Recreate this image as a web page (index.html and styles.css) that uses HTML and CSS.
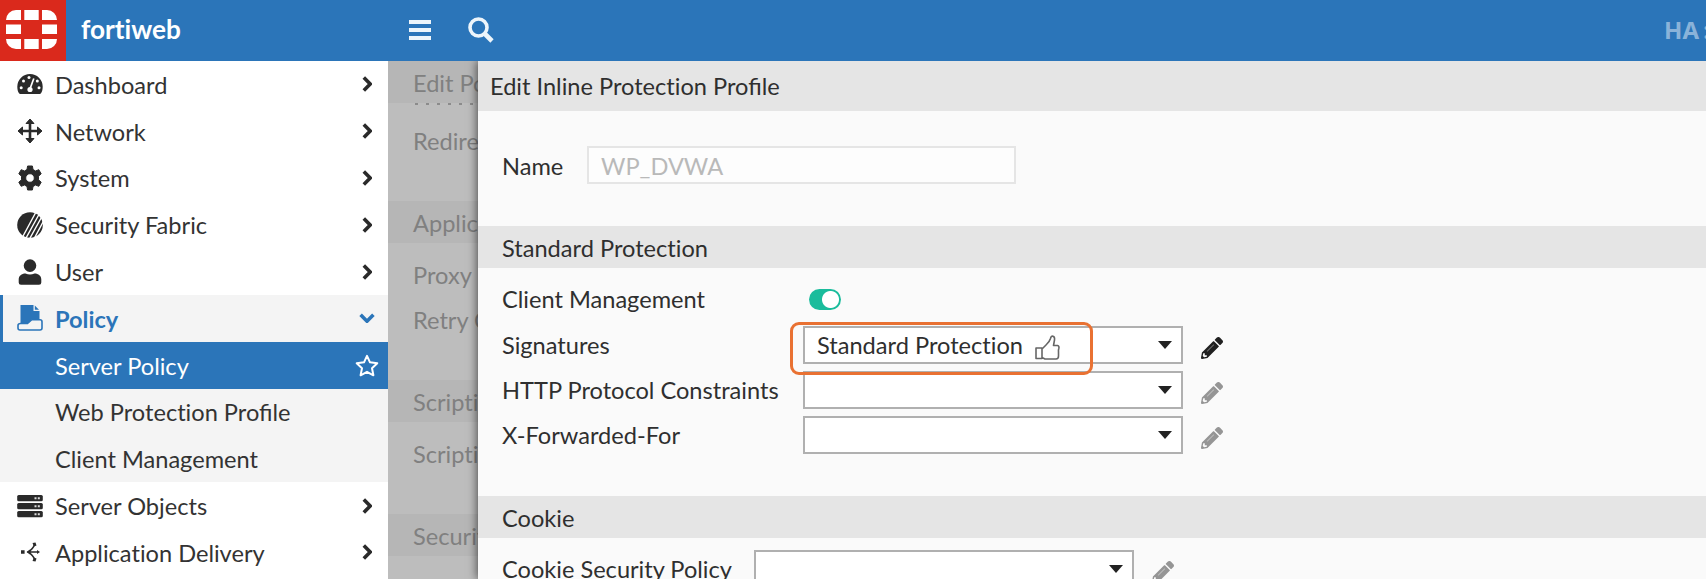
FILE: index.html
```html
<!DOCTYPE html>
<html lang="en">
<head>
<meta charset="utf-8">
<title>fortiweb</title>
<link rel="stylesheet" href="styles.css">
</head>
<body>
<svg class="defs" width="0" height="0">
  <symbol id="right" viewBox="0 0 10 16"><path d="M1.8 1.6 L8.2 8 L1.8 14.4" fill="none" stroke="currentColor" stroke-width="3.6"/></symbol>
  <symbol id="pencil" viewBox="0 0 512 512"><path fill="currentColor" d="M498 142l-46 46c-5 5-13 5-17 0L324 77c-5-5-5-12 0-17l46-46c19-19 49-19 68 0l60 60c19 19 19 49 0 68zm-214-42L22 362 0 484c-3 16 12 30 28 28l122-22 262-262c5-5 5-13 0-17L301 100c-4-5-12-5-17 0zM88 424h48v36l-64 12-32-32 12-64h36v48z"/><path d="M140 335L300 175" stroke="#fff" stroke-opacity=".35" stroke-width="24"/></symbol>
</svg>
<header class="topbar">
  <div class="logo">
    <svg width="51" height="39" viewBox="0 0 51 39" fill="#fff"><path d="M0 10A10 10 0 0 1 10 0H15V10ZM18.300 0H32.700V10H18.300ZM36 0H41A10 10 0 0 1 51 10H36ZM0 14.500H15V24H0ZM36 14.500H51V24H36ZM0 29H15V39H10A10 10 0 0 1 0 29ZM18.300 29H32.700V39H18.300ZM36 29H51A10 10 0 0 1 41 39H36Z"/></svg>
  </div>
  <div class="brand">fortiweb</div>
  <svg class="burger" width="22" height="20" viewBox="0 0 22 20" fill="#edf5fb"><path d="M0 0H22V4H0ZM0 8H22V12H0ZM0 16H22V20H0Z"/></svg>
  <svg class="search" width="26" height="26" viewBox="0 0 26 26" fill="none" stroke="#edf5fb"><circle cx="10.500" cy="10.500" r="8.500" stroke-width="3.600"/><path d="M17 17L24 24" stroke-width="4.600"/></svg>
  <div class="ha">HA :</div>
</header>
<div class="body">
  <nav class="sidebar">
    <a class="item"><svg class="ico" viewBox="0 0 26 26"><path fill="currentColor" d="M13 3A12.700 12.700 0 0 0 .3 15.700C.3 18.500 1 21 2.200 22.600Q2.600 23 3.200 23H22.800Q23.400 23 23.800 22.600C25 21 25.700 18.500 25.700 15.700A12.700 12.700 0 0 0 13 3Z"/><g fill="#fff"><circle cx="4.200" cy="16.800" r="1.500"/><circle cx="6.500" cy="10" r="1.500"/><circle cx="12" cy="6.500" r="1.500"/><circle cx="20.300" cy="10" r="1.500"/><circle cx="22" cy="16.800" r="1.500"/></g><path d="M16.800 7.500L13.300 17" stroke="#fff" stroke-width="1.700"/><circle cx="13" cy="18.500" r="2.600" fill="#fff"/></svg><span>Dashboard</span><svg class="chev"><use href="#right"/></svg></a>
    <a class="item"><svg class="ico" viewBox="0 0 26 26"><path d="M13 4V22M4 13H22" stroke="currentColor" stroke-width="2.600"/><path fill="currentColor" stroke="currentColor" stroke-linejoin="round" d="M13 1L17 5.500H9ZM13 25L17 20.500H9ZM1 13L5.500 9V17ZM25 13L20.500 9V17Z"/></svg><span>Network</span><svg class="chev"><use href="#right"/></svg></a>
    <a class="item"><svg class="ico" viewBox="0 0 26 26"><path fill="currentColor" fill-rule="evenodd" stroke="currentColor" stroke-width="1" stroke-linejoin="round" d="M10.600 1H15.400L16 4.500L18.500 6L21.800 4.700L24.200 8.800L21.500 11.200V14.800L24.200 17.200L21.800 21.300L18.500 20L16 21.500L15.400 25H10.600L10 21.500L7.500 20L4.200 21.300L1.800 17.200L4.500 14.800V11.200L1.800 8.800L4.200 4.700L7.500 6L10 4.500ZM13 8.700A4.300 4.300 0 1 0 13 17.300A4.300 4.300 0 1 0 13 8.700Z"/></svg><span>System</span><svg class="chev"><use href="#right"/></svg></a>
    <a class="item"><svg class="ico" viewBox="0 0 26 26"><circle cx="13" cy="13" r="12.800" fill="currentColor"/><path d="M19 0L5 26M22.500 1.500L8.500 27M25.500 3.500L12.500 27M26.500 9L17 27" stroke="#fff" stroke-width="1.400"/></svg><span>Security Fabric</span><svg class="chev"><use href="#right"/></svg></a>
    <a class="item"><svg class="ico" viewBox="0 0 26 26"><path fill="currentColor" d="M13 .3A6.300 6.300 0 1 1 13 12.900A6.300 6.300 0 1 1 13 .3ZM8.500 14.500Q13 16.500 17.500 14.500C21.500 14.500 24.300 17 24.300 20.500V23.500Q24.300 25.700 22 25.700H4Q1.700 25.700 1.700 23.500V20.500C1.700 17 4.500 14.500 8.500 14.500Z"/></svg><span>User</span><svg class="chev"><use href="#right"/></svg></a>
    <a class="item open"><svg class="ico" viewBox="0 0 26 26"><path fill="currentColor" d="M3.500 0H16.500V6H22.500V14H15L11.500 18H3.500Z"/><path fill="currentColor" d="M17.800 .5L22 4.700H17.800Z"/><path fill="none" stroke="currentColor" stroke-width="1.600" stroke-linejoin="round" d="M3.500 18.500H10.500L14.500 14.800H23Q25 14.800 25 16.800V23Q25 25 23 25H3Q1 25 1 23V20.500Q1 18.500 3.500 18.500Z"/></svg><span>Policy</span><svg class="down" viewBox="0 0 16 10"><path d="M1.600 1.800L8 8.200L14.400 1.800" fill="none" stroke="currentColor" stroke-width="3.600"/></svg></a>
    <a class="sub active"><span>Server Policy</span><svg class="star" viewBox="0 0 24 23"><path fill="none" stroke="currentColor" stroke-width="2" stroke-linejoin="round" d="M12 1.800L15 8.300L22.300 9.200L17 14.200L18.400 21.300L12 17.800L5.600 21.300L7 14.200L1.700 9.200L9 8.300Z"/></svg></a>
    <a class="sub"><span>Web Protection <b class="lig">Profile</b></span></a>
    <a class="sub"><span>Client Management</span></a>
    <a class="item"><svg class="ico" viewBox="0 0 26 26"><g fill="currentColor"><rect x=".2" y="2" width="25.600" height="6.300" rx="1.500"/><rect x=".2" y="10" width="25.600" height="6.300" rx="1.500"/><rect x=".2" y="18" width="25.600" height="6.300" rx="1.500"/></g><path stroke="#ddd" stroke-width="2" stroke-dasharray="2 1.300" d="M17.500 5.200H23M17.500 13.200H23M17.500 21.200H23"/></svg><span>Server Objects</span><svg class="chev"><use href="#right"/></svg></a>
    <a class="item"><svg class="ico" viewBox="0 0 26 26"><path fill="none" stroke="currentColor" stroke-width="1.500" d="M17.500 5.500C16.500 9 13.500 11.500 11 13C13.500 14.500 16.500 17 17.500 20.500M10 13H21"/><path fill="currentColor" d="M4 11.200H7.600V14.800H4ZM15.500 4L18.500 3.500L19.500 6.500L17 7.500ZM15.500 22L18.500 22.500L19.500 19.500L17 18.500ZM20 11L23 13L20 15ZM10 13L13 10.500V15.500Z"/></svg><span>Application Delivery</span><svg class="chev"><use href="#right"/></svg></a>
  </nav>
  <main class="behind">
    <div class="band">Edit Policy</div>
    <div class="dots"></div>
    <div class="line redirect">Redirect</div>
    <div class="band">Application</div>
    <div class="line">Proxy</div>
    <div class="line retry">Retry On</div>
    <div class="band">Scripting</div>
    <div class="line single">Scripting</div>
    <div class="band">Security</div>
  </main>
  <section class="drawer">
    <h1 class="title">Edit Inline Protection <b class="lig">Profile</b></h1>
    <div class="name-row"><label>Name</label><div class="input">WP_DVWA</div></div>
    <h2 class="section">Standard Protection</h2>
    <div class="form">
      <div class="row toggle-row"><label>Client Management</label><div class="toggle"></div></div>
      <div class="row"><label>Signatures</label><div class="select"><span>Standard Protection</span><svg class="thumb" viewBox="0 0 25 25"><path fill="#fff" stroke="#666" stroke-width="1.600" stroke-linejoin="round" d="M1 13H7V23.500H1ZM7 14L11 10Q14.500 7 15.500 3.500Q16 .8 18 1.200Q20 1.800 19.500 5L18.500 10.500H22.500Q24.500 11 23.800 13.500Q23.300 15 23.500 17V21Q23.500 24 21 24H10L7 22.500Z"/></svg><i class="caret"></i><div class="highlight"></div></div><svg class="pencil dark"><use href="#pencil"/></svg></div>
      <div class="row"><label>HTTP Protocol Constraints</label><div class="select"><i class="caret"></i></div><svg class="pencil"><use href="#pencil"/></svg></div>
      <div class="row"><label>X-Forwarded-For</label><div class="select"><i class="caret"></i></div><svg class="pencil"><use href="#pencil"/></svg></div>
    </div>
    <h2 class="section">Cookie</h2>
    <div class="form cookie">
      <div class="row"><label>Cookie Security Policy</label><div class="select"><i class="caret"></i></div><svg class="pencil"><use href="#pencil"/></svg></div>
    </div>
  </section>
</div>
</body>
</html>
```
FILE: styles.css
```css
* { box-sizing: border-box; }
html { overflow: hidden; }
body { margin: 0; width: 1706px; height: 579px; overflow: hidden; font-family: Lato, sans-serif; font-size: 23.6px; font-variant-ligatures: none; color: #333; background: #fff; display: flex; flex-direction: column; white-space: nowrap; }
svg { flex: none; display: block; }
.defs { position: absolute; }
.lig { font-weight: inherit; font-variant-ligatures: normal; }
.topbar { height: 61px; flex: none; background: #2b75b9; display: flex; align-items: center; overflow: hidden; }
.logo { width: 66px; height: 61px; background: #da291c; display: flex; align-items: center; padding: 0 0 2px 6px; flex: none; }
.brand { margin-left: 15px; width: 328px; color: #fff; font-weight: 700; font-size: 26.2px; line-height: 58px; padding-bottom: 3px; flex: none; }
.burger { margin-bottom: 1px; }
.search { margin: 0 0 2px 37px; }
.ha { margin-left: auto; margin-right: -4px; padding-bottom: 2px; color: #8ab3d9; font-family: "Noto Sans", sans-serif; font-weight: 700; font-size: 24px; word-spacing: -2px; }
.body { flex: 1; min-height: 0; display: flex; position: relative; overflow: hidden; }
.sidebar { width: 388px; flex: none; display: flex; flex-direction: column; background: #fff; }
.item, .sub { height: 46.8px; flex: none; display: flex; align-items: center; padding: 0 16px 0 17px; }
.item span { margin-left: 12px; padding-top: 1px; flex: 1; }
.ico { width: 26px; height: 26px; color: #2a2a2a; }
.chev { width: 10px; height: 16px; color: #2a2a2a; }
.open { background: #f4f4f4; box-shadow: inset 3px 0 #2b75b9; color: #2b75b9; font-weight: 700; padding-right: 13px; }
.open .ico, .down { color: #2b75b9; }
.down { width: 16px; height: 10px; }
.sub { background: #f4f4f4; padding-left: 55px; padding-right: 9px; }
.sub span { flex: 1; padding-top: 1px; }
.active { background: #2b75b9; color: #fff; }
.star { width: 24px; height: 23px; }
.behind { flex: 1; background: #bdbdbd; color: #808080; }
.band, .line { height: 42px; line-height: 44px; padding-left: 25px; }
.band { background: #b6b6b6; }
.dots { height: 2px; margin-left: 27px; width: 60px; background: repeating-linear-gradient(90deg, #8b8b8b 0 3px, transparent 3px 11px); }
.line { margin-top: 10px; }
.redirect { margin: 14px 0 40px; }
.retry { margin: 3px 0 40px; }
.single { margin-bottom: 40px; }
.drawer { position: absolute; left: 478px; top: 0; right: 0; bottom: 0; background: #fafafa; box-shadow: -1px 0 9px rgba(0,0,0,.6); color: #2f2f2f; overflow: hidden; }
h1, h2 { margin: 0; font-size: inherit; font-weight: 400; }
.title { height: 50px; line-height: 50px; padding-left: 12px; background: #e5e5e5; }
.name-row { height: 115px; padding: 35px 0 0 24px; display: flex; }
.name-row label { width: 85px; line-height: 40px; }
.input { width: 429px; height: 38px; border: 2px solid #e5e5e5; background: #fdfdfd; color: #b9b9b9; line-height: 36px; padding-left: 12px; }
.section { height: 42px; line-height: 45px; padding-left: 24px; background: #e5e5e5; }
.form { height: 228px; padding: 12px 0 0 24px; display: flex; flex-direction: column; gap: 7px; }
.row { display: flex; align-items: center; height: 38px; flex: none; }
.row label { width: 301px; flex: none; line-height: 39px; }
.toggle-row { height: 39px; }
.toggle { margin-left: 6px; width: 32px; height: 21px; border-radius: 11px; background: radial-gradient(circle at 21.500px 10.500px, #fff 8px, #1abc9c 9px); }
.select { position: relative; width: 380px; height: 38px; border: 2px solid #b0b0b0; background: #fff; display: flex; align-items: center; padding: 0 9px 0 12px; }
.select span { padding-bottom: 1px; }
.select .thumb { width: 25px; height: 25px; margin: 4px 0 0 12px; }
.caret { margin-left: auto; border: 7px solid transparent; border-top: 8px solid #222; border-bottom: 0; }
.highlight { position: absolute; left: -15px; top: -6px; width: 303px; height: 53px; border: 3px solid #e97132; border-radius: 9px; z-index: 2; }
.pencil { width: 22px; height: 22px; margin: 5px 0 0 18px; color: #959595; }
.dark { color: #202020; }
.cookie label { width: 252px; }
```
